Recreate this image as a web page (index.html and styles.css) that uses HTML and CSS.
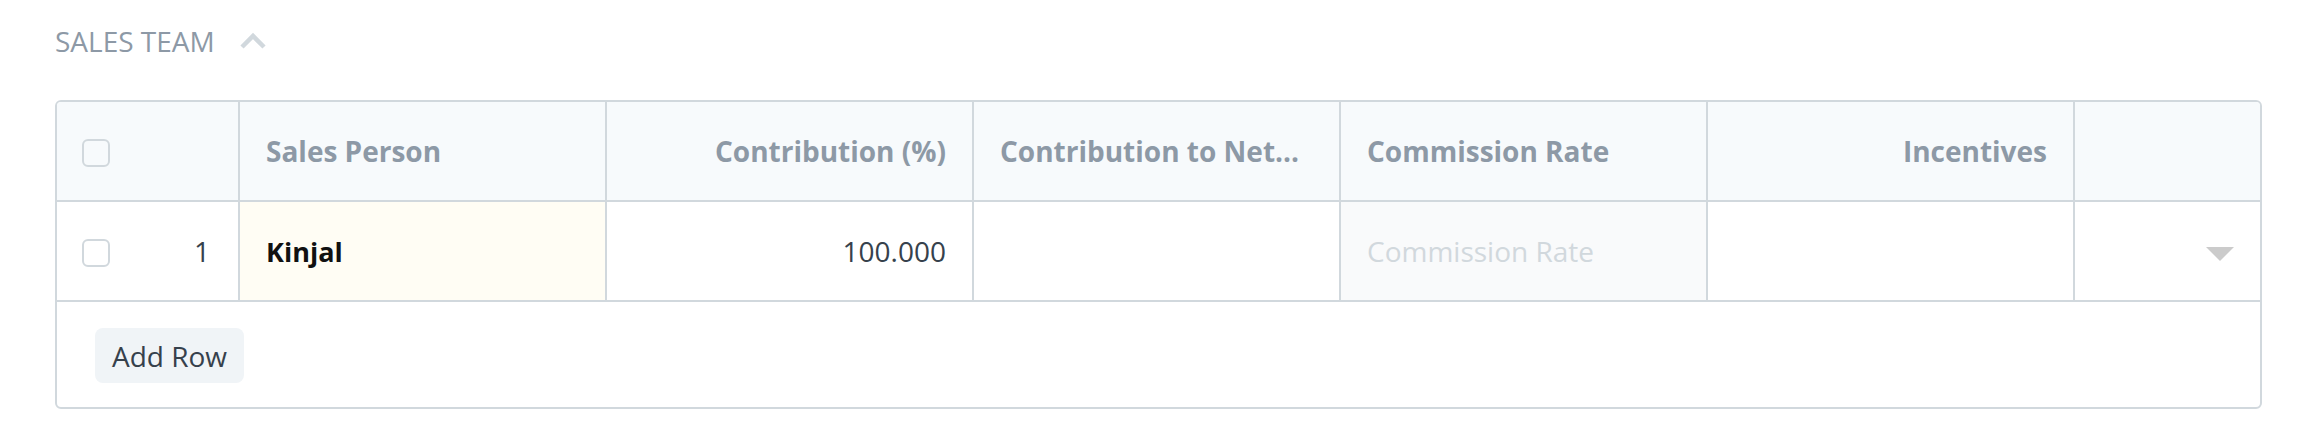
FILE: index.html
```html
<!DOCTYPE html>
<html>
<head>
<meta charset="utf-8">
<title>Sales Team</title>
<link rel="stylesheet" href="styles.css">
</head>
<body>
<section class="section">
  <div class="section-head">
    <span class="section-title">SALES TEAM</span>
    <svg class="collapse-icon" width="26" height="18" viewBox="0 0 26 18" aria-hidden="true">
      <polyline points="2,15 13,4 24,15" fill="none" stroke="#d1d8dd" stroke-width="4.5" stroke-linejoin="miter"/>
    </svg>
  </div>

  <div class="grid">
    <div class="row head">
      <div class="cell idx"><span class="check"></span></div>
      <div class="cell">Sales Person</div>
      <div class="cell right">Contribution (%)</div>
      <div class="cell" title="Contribution to Net Total">Contribution to Net...</div>
      <div class="cell">Commission Rate</div>
      <div class="cell right">Incentives</div>
      <div class="cell last"></div>
    </div>

    <div class="row body">
      <div class="cell idx"><span class="check"></span><span class="num">1</span></div>
      <div class="cell req"><span class="link">Kinjal</span></div>
      <div class="cell right">100.000</div>
      <div class="cell"></div>
      <div class="cell static"><span class="placeholder">Commission Rate</span></div>
      <div class="cell"></div>
      <div class="cell last right"><span class="caret"></span></div>
    </div>

    <div class="footer">
      <button class="btn">Add Row</button>
    </div>
  </div>
</section>
</body>
</html>
```

FILE: styles.css
```css
html, body {
  margin: 0;
  padding: 0;
  background: #ffffff;
}

body {
  font-family: "Open Sans", "Noto Sans", sans-serif;
  color: #36414c;
}

.section {
  padding: 20px 55px 0 55px;
}

.section-head {
  display: flex;
  align-items: center;
  height: 42px;
  gap: 25px;
}

.section-title {
  font-size: 28px;
  line-height: 42px;
  color: #8d99a6;
  font-weight: 400;
}

.collapse-icon {
  display: block;
  margin-top: -1px;
}

.grid {
  margin-top: 38px;
  border: 2px solid #d1d8dd;
  border-radius: 6px;
  overflow: hidden;
}

.row {
  display: grid;
  grid-template-columns: 183px repeat(5, 367px) 1fr;
  height: 100px;
  border-bottom: 2px solid #d1d8dd;
  box-sizing: border-box;
}

.row.head {
  background: #f7fafc;
  color: #8d99a6;
  font-size: 28px;
  font-weight: 700;
}

.row.body {
  background: #ffffff;
  font-size: 28px;
  color: #36414c;
}

.cell {
  display: flex;
  align-items: center;
  padding: 0 26px;
  border-right: 2px solid #d1d8dd;
  box-sizing: border-box;
  min-width: 0;
  white-space: nowrap;
}

.cell.last {
  border-right: none;
}

.cell.right {
  justify-content: flex-end;
}

.cell.idx {
  justify-content: space-between;
  padding: 0 28px 0 25px;
}

.check {
  width: 28px;
  height: 28px;
  box-sizing: border-box;
  border: 2px solid #d1d8dd;
  border-radius: 6px;
  margin-top: 3px;
  display: block;
}

.num {
  color: #36414c;
}

.cell.req {
  background: #fffdf4;
}

.link {
  font-weight: 700;
  font-size: 27px;
  color: #111111;
}

.cell.static {
  background: #f9fafb;
}

.placeholder {
  color: #d1d8dd;
}

.caret {
  width: 0;
  height: 0;
  border-left: 14px solid transparent;
  border-right: 14px solid transparent;
  border-top: 14px solid #cbcbcb;
  margin-top: 5px;
}

.footer {
  height: 105px;
  padding: 26px 38px 0 38px;
  box-sizing: border-box;
}

.btn {
  font-family: "Open Sans", "Noto Sans", sans-serif;
  font-size: 28px;
  color: #36414c;
  background: #f0f4f7;
  border: none;
  border-radius: 8px;
  height: 55px;
  padding: 0 17px;
  display: inline-flex;
  align-items: center;
  cursor: pointer;
}
```
